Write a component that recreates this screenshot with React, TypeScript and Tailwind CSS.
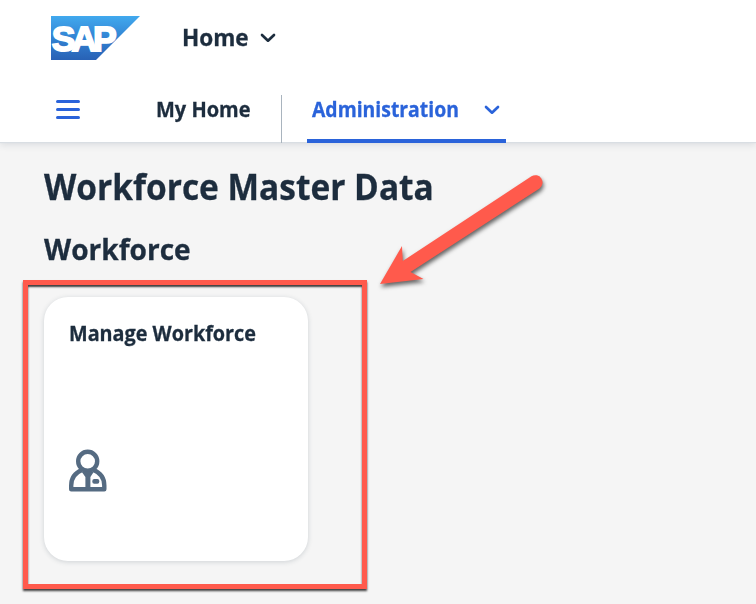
import React from "react";

function SapLogo() {
  return (
    <svg width="89" height="44" viewBox="0 0 89 44" className="block" aria-label="SAP">
      <defs>
        <linearGradient id="sap" x1="0" y1="0" x2="0" y2="1">
          <stop offset="0" stopColor="#41a9ee" />
          <stop offset="0.5" stopColor="#3283d3" />
          <stop offset="1" stopColor="#2861b5" />
        </linearGradient>
      </defs>
      <path d="M0 0H89L45 44H0Z" fill="url(#sap)" />
      <text x="0.8" y="34.6" fill="#fff" stroke="#fff" strokeWidth="1.8" fontFamily="'Liberation Sans', Arial, sans-serif" fontWeight="700" fontSize="35.5" letterSpacing="-4">SAP</text>
    </svg>
  );
}

function Chevron({ className = "" }: { className?: string }) {
  return (
    <svg width="16" height="10" viewBox="0 0 16 10" className={className} fill="none" stroke="currentColor" strokeWidth="2.7" strokeLinecap="round" strokeLinejoin="round">
      <path d="M2 2L8 7.7L14 2" />
    </svg>
  );
}

function WorkerIcon() {
  return (
    <svg width="38" height="44" viewBox="0 0 38 44" className="block" fill="none" stroke="#556b82" strokeWidth="4.4">
      <circle cx="18.7" cy="12.3" r="9.5" />
      <path d="M13 21C5.5 24 2.2 29 2.2 36.5V40.2H35.3V36.5C35.3 29 32 24 24.5 21" strokeLinejoin="round" />
      <path d="M12.5 22.5H25L21.4 28V41H16.4V28Z" fill="#556b82" stroke="none" />
      <rect x="23.3" y="30" width="7" height="4.8" rx="2" fill="#556b82" stroke="none" />
    </svg>
  );
}

function Arrow() {
  return (
    <svg width="190" height="130" viewBox="370 165 190 130" className="pointer-events-none absolute left-[370px] top-[165px] drop-shadow-[1px_3px_2px_rgba(0,0,0,0.6)]">
      <path d="M380 284L402 246L402.8 261L531.5 176.2A7.3 7.3 0 0 1 539.5 188.4L410.5 272L423.5 279Z" fill="#ff5a4c" />
    </svg>
  );
}

export default function App() {
  return (
    <div className="relative h-[604px] w-[756px] overflow-hidden bg-[#f5f5f5] font-['Open_Sans','Noto_Sans',sans-serif] font-bold text-[#1d2d3e] [-webkit-text-stroke:0.3px_currentColor]">
      <header className="h-[142px] bg-white shadow-[0_1px_1px_#d9dee3,0_3px_7px_rgba(34,53,72,0.12)]">
        <div className="flex h-[76px] items-center pl-[51px]">
          <SapLogo />
          <span className="-mt-0.5 ml-[42px] w-[78px] origin-left scale-x-[0.98] whitespace-nowrap text-[23px] leading-8">Home</span>
          <Chevron />
        </div>
        <nav className="flex h-[67px] pl-[56px] text-[21px] leading-8">
          <div className="flex w-6 flex-col gap-[5px] pt-[24px]">
            <i className="h-[3px] rounded-full bg-[#2a63da]" />
            <i className="h-[3px] rounded-full bg-[#2a63da]" />
            <i className="h-[3px] rounded-full bg-[#2a63da]" />
          </div>
          <span className="ml-[76px] w-[125px] origin-left scale-x-[0.952] whitespace-nowrap pt-[17px]">My Home</span>
          <div className="mt-[19px] h-12 w-px bg-[#a9b4be]" />
          <div className="ml-[25px] flex w-[199px] rounded-t-[2px] border-b-4 border-[#2a63da] pl-[5px] pt-[17px] text-[#2a63da]">
            <span className="w-[172px] origin-left scale-x-[0.923] whitespace-nowrap">Administration</span>
            <Chevron className="mt-[12px] shrink-0" />
          </div>
        </nav>
      </header>
      <main className="pl-[44px] pt-[21px]">
        <h1 className="origin-left scale-x-[0.956] whitespace-nowrap text-[35px] leading-[48px]">Workforce Master Data</h1>
        <h2 className="mt-[18px] origin-left scale-x-[0.968] whitespace-nowrap text-[29px] leading-[40px]">Workforce</h2>
        <section className="-ml-[21px] mt-[11px] h-[309px] w-[344px] border-[5px] border-[#ff5a4c] pl-4 pt-3 shadow-[0_2px_2px_rgba(0,0,0,0.75),inset_0_2px_2px_rgba(0,0,0,0.75)]">
          <article className="flex h-[264px] w-[264px] flex-col rounded-[24px] bg-white pl-[25px] pt-[21px] shadow-[0_1px_5px_rgba(34,53,72,0.18)]">
            <h3 className="h-[131px] origin-left scale-x-[0.965] whitespace-nowrap text-[20.5px] leading-[30px]">Manage Workforce</h3>
            <WorkerIcon />
          </article>
        </section>
      </main>
      <Arrow />
    </div>
  );
}
